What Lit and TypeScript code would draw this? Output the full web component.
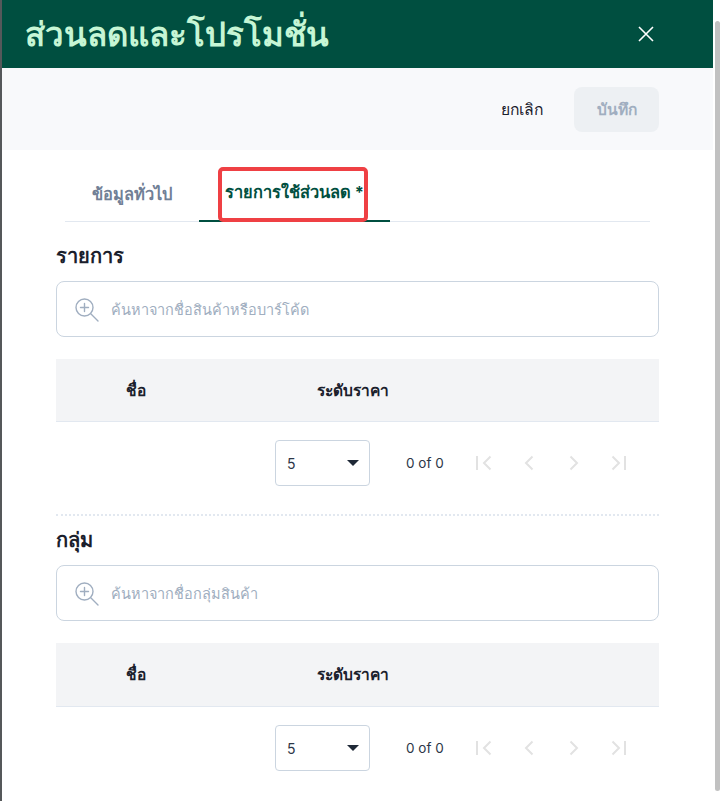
import { html, css, LitElement } from "lit";
import { customElement } from "lit/decorators.js";

@customElement("app-root")
export class AppRoot extends LitElement {
	static styles = css`
		:host {
			display: block;
			height: 801px;
			overflow: hidden;
			font-family: "Inter", "Noto Sans", "DejaVu Sans", sans-serif;
			background: #fff;
			position: relative;
		}
		.page {
			display: flex;
			height: 801px;
		}
		.edge {
			width: 2px;
			flex: none;
			background: #55585a;
		}
		.modal {
			width: 711px;
			flex: none;
		}
		.header {
			height: 68px;
			background: #004f40;
			display: flex;
			align-items: center;
			justify-content: space-between;
			padding: 0 58px 0 23px;
			box-sizing: border-box;
		}
		.title {
			font-size: 33px;
			font-weight: 600;
			color: #c6f6d5;
			line-height: 1;
		}
		.close {
			width: 18px;
			height: 18px;
			display: block;
		}
		.toolbar {
			height: 82px;
			background: #f8f9fb;
			display: flex;
			align-items: center;
			justify-content: flex-end;
			padding: 0 54px 0 0;
			gap: 31px;
			box-sizing: border-box;
		}
		.cancel {
			font-size: 15.7px;
			font-weight: 500;
			color: #1a202c;
		}
		.save {
			width: 85px;
			height: 45px;
			border-radius: 8px;
			background: #edf0f3;
			color: #a0aec0;
			font-size: 15.5px;
			font-weight: 600;
			display: flex;
			align-items: center;
			justify-content: center;
		}
		.body {
			padding: 0 54px;
		}
		.tabs {
			display: flex;
			margin: 0 9px;
			height: 72px;
			box-sizing: border-box;
			border-bottom: 1px solid #e2e8f0;
			position: relative;
		}
		.tab {
			display: flex;
			align-items: center;
			justify-content: center;
			font-size: 16.4px;
			font-weight: 600;
			color: #718096;
			box-sizing: border-box;
			height: 72px;
			padding-top: 16px;
		}
		.tab.general {
			width: 134px;
		}
		.tab.active {
			width: 191px;
			color: #004f40;
			font-weight: 700;
			border-bottom: 2px solid #004f40;
			padding-top: 14px;
		}
		.mark {
			position: absolute;
			left: 153px;
			top: 17px;
			width: 150px;
			height: 55px;
			box-sizing: border-box;
			border: 4px solid #ef4044;
			border-radius: 5px;
		}
		h2 {
			margin: 0;
			font-size: 20px;
			font-weight: 700;
			color: #1a202c;
			line-height: 23px;
		}
		.section-one {
			padding-top: 23px;
		}
		.section-two {
			padding-top: 13px;
		}
		.search {
			margin-top: 13px;
			height: 56px;
			border: 1px solid #cbd5e0;
			border-radius: 8px;
			box-sizing: border-box;
			display: flex;
			align-items: center;
			padding-left: 17px;
			gap: 12px;
			font-size: 14.5px;
			font-weight: 500;
			color: #a0aec0;
		}
		.search svg {
			width: 25px;
			height: 25px;
			display: block;
		}
		.head {
			margin-top: 22px;
			height: 63px;
			background: #f3f4f6;
			border-bottom: 1px solid #e2e8f0;
			box-sizing: border-box;
			display: flex;
			align-items: center;
			font-size: 15.5px;
			font-weight: 700;
			color: #1a202c;
		}
		.section-two .head {
			height: 64px;
		}
		.head .name {
			width: 261px;
			padding-left: 70px;
			box-sizing: border-box;
		}
		.pager {
			display: flex;
			align-items: center;
			height: 46px;
			margin-top: 18px;
			padding-left: 219px;
		}
		.select {
			width: 95px;
			height: 46px;
			border: 1px solid #cbd5e0;
			border-radius: 4px;
			box-sizing: border-box;
			display: flex;
			align-items: center;
			justify-content: space-between;
			padding: 0 10px 0 11px;
			font-size: 14px;
			color: #2d3748;
		}
		.caret {
			width: 0;
			height: 0;
			border-left: 6px solid transparent;
			border-right: 6px solid transparent;
			border-top: 6px solid #1f2937;
		}
		.count {
			margin-left: 36px;
			width: 37px;
			white-space: nowrap;
			font-size: 13.5px;
			color: #2d3748;
		}
		.nav {
			display: flex;
			margin-left: 33px;
			gap: 29px;
		}
		.nav svg {
			width: 16px;
			height: 16px;
			display: block;
		}
		.rule {
			margin-top: 28px;
			border-top: 2px dotted #e2e8f0;
		}
		.scrollbar {
			position: absolute;
			left: 715px;
			top: 21px;
			width: 5px;
			height: 770px;
			border-radius: 3px;
			background: #c1c1c1;
		}
	`;

	renderSearch(placeholder: string) {
		return html`<div class="search">
			<svg viewBox="0 0 25 25" fill="none" stroke="#a0aec0" stroke-width="1.4" stroke-linecap="round">
				<circle cx="10.5" cy="10.5" r="8.5"></circle>
				<path d="M10.5 6.5v8M6.5 10.5h8M17 17l7 7"></path>
			</svg>
			<span>${placeholder}</span>
		</div>`;
	}

	renderTable() {
		return html`<div class="head">
				<div class="name">ชื่อ</div>
				<div>ระดับราคา</div>
			</div>
			<div class="pager">
				<div class="select"><span>5</span><span class="caret"></span></div>
				<div class="count">0 of 0</div>
				<div class="nav">
					${["M1 1v14M14.5 1.5L8 8l6.5 6.5", "M11.5 1.5L5 8l6.5 6.5", "M4.5 1.5L11 8l-6.5 6.5", "M1.5 1.5L8 8l-6.5 6.5M14 1v14"].map(
						(d) => html`<svg viewBox="0 0 16 16" fill="none" stroke="#e2e2e2" stroke-width="2">
							<path d=${d}></path>
						</svg>`
					)}
				</div>
			</div>`;
	}

	render() {
		return html`<div class="page">
				<div class="edge"></div>
				<div class="modal">
					<div class="header">
						<div class="title">ส่วนลดและโปรโมชั่น</div>
						<svg class="close" viewBox="0 0 18 18" fill="none" stroke="#fff" stroke-width="1.6">
							<path d="M2 2l14 14M16 2L2 16"></path>
						</svg>
					</div>
					<div class="toolbar">
						<div class="cancel">ยกเลิก</div>
						<div class="save">บันทึก</div>
					</div>
					<div class="body">
						<div class="tabs">
							<div class="tab general">ข้อมูลทั่วไป</div>
							<div class="tab active">รายการใช้ส่วนลด *</div>
							<div class="mark"></div>
						</div>
						<div class="section-one">
							<h2>รายการ</h2>
							${this.renderSearch("ค้นหาจากชื่อสินค้าหรือบาร์โค้ด")} ${this.renderTable()}
						</div>
						<div class="rule"></div>
						<div class="section-two">
							<h2>กลุ่ม</h2>
							${this.renderSearch("ค้นหาจากชื่อกลุ่มสินค้า")} ${this.renderTable()}
						</div>
					</div>
				</div>
			</div>
			<div class="scrollbar"></div>`;
	}
}
